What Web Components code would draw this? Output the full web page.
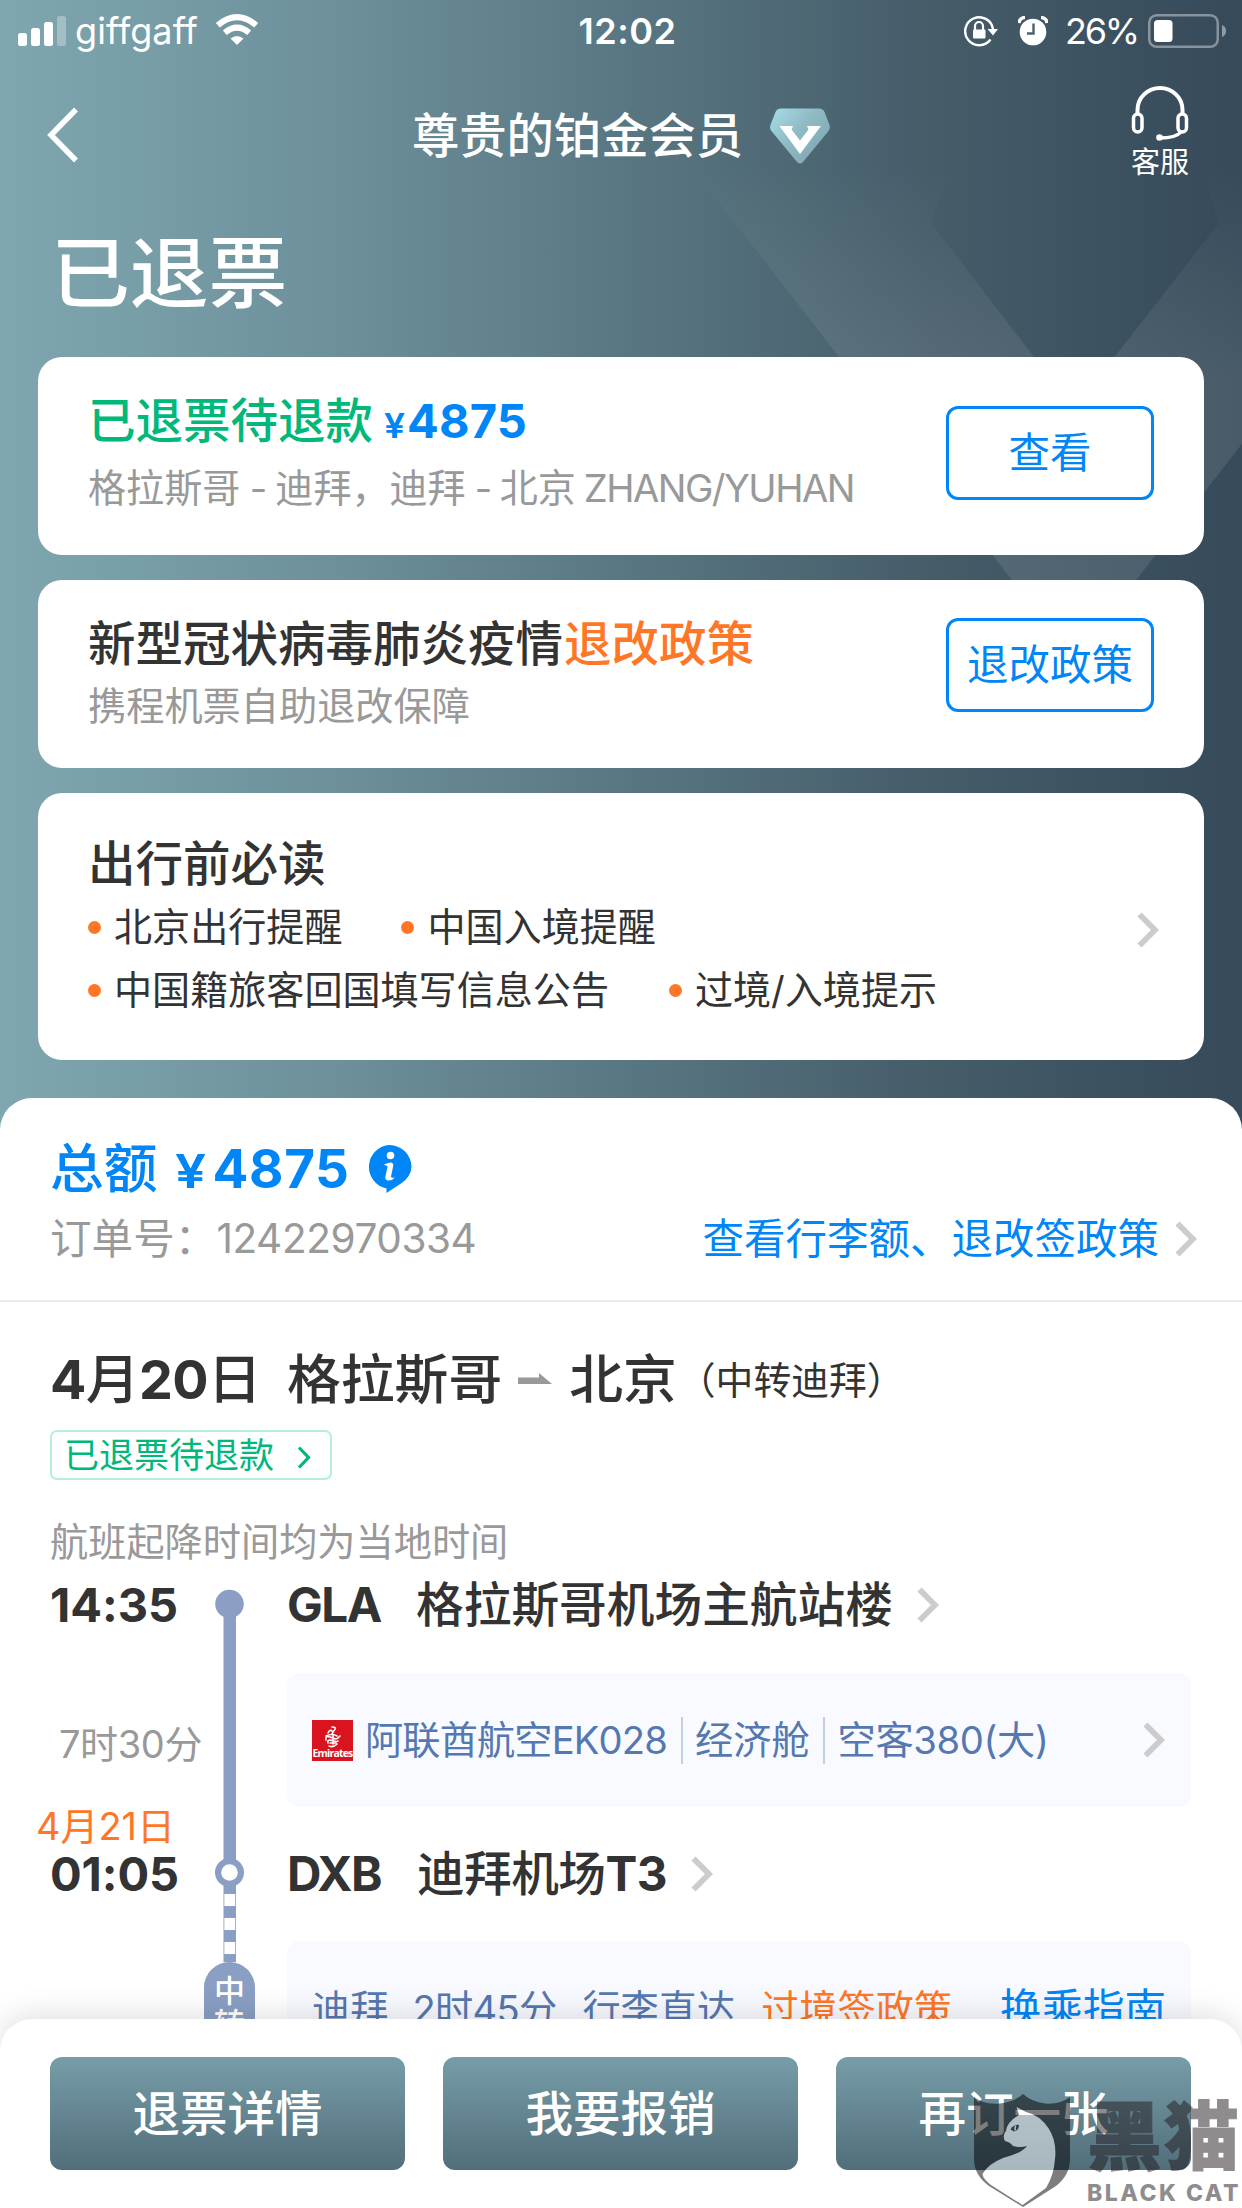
<!DOCTYPE html>
<html lang="zh-CN">
<head>
<meta charset="utf-8">
<title>订单详情</title>
<style>
html,body{margin:0;padding:0}
body{width:1242px;height:2208px;overflow:hidden;background:#fff;font-family:Inter,"Noto Sans CJK SC",sans-serif;color:#333;font-feature-settings:"calt" 0}
</style>
</head>
<body>
<order-screen></order-screen>
<script>
function define(name, html, setup) {
  customElements.define(name, class extends HTMLElement {
    connectedCallback() {
      if (this.shadowRoot) return;
      const root = this.attachShadow({ mode: 'open' });
      root.innerHTML = html;
      if (setup) setup.call(this, root);
    }
  });
}

define('status-bar', `
<style>
:host{display:flex;height:62px;align-items:center;color:#fff;font-size:36px;line-height:62px}
.l,.r{flex:1 1 0;min-width:0;display:flex;align-items:center}
.l{padding-left:18px}.r{justify-content:flex-end;padding-right:15px}
.time{font-weight:600;display:flex;margin-left:10px}
svg{display:block;flex:none}
</style>
<div class="l">
<svg width="48" height="30" viewBox="0 0 48 30" fill="#fff"><rect y="17" width="9" height="13" rx="2.5"/><rect x="13" y="12" width="9" height="18" rx="2.5"/><rect x="26" y="6" width="9" height="24" rx="2.5"/><rect x="39" width="9" height="30" rx="2.5" opacity=".3"/></svg>
<fit-text w="123" style="margin-left:9px">giffgaff</fit-text>
<svg style="margin-left:17px;margin-top:-2px" width="44" height="32" viewBox="0 0 44 32"><path d="M22 31L15.5 24.5Q22 19.500 28.500 24.500Z" fill="#fff"/><path d="M9.800 18.700Q22 8.500 34.200 18.700" stroke="#fff" stroke-width="6" fill="none"/><path d="M2.800 11.200Q22 -4.800 41.200 11.200" stroke="#fff" stroke-width="6" fill="none"/></svg>
</div>
<div class="time"><fit-text w="98">12:02</fit-text></div>
<div class="r">
<svg width="34" height="32" viewBox="0 0 34 32" fill="none" stroke="#fff"><path d="M26.500 24.500A14 14 0 1 1 29 14" stroke-width="2.400"/><path d="M23.500 14h10.500l-5 6.500z" fill="#fff" stroke="none"/><path d="M11 15v-4a4 4 0 0 1 8 0v4" stroke-width="2.200"/><rect x="9" y="14.500" width="12.500" height="9" rx="1" fill="#fff" stroke="none"/></svg>
<svg style="margin-left:20px" width="30" height="30" viewBox="0 0 30 30"><circle cx="15" cy="16" r="13.300" fill="#fff"/><path d="M1 7A6 6 0 0 1 7 1.500M29 7A6 6 0 0 0 23 1.500" stroke="#fff" stroke-width="3.500" fill="none"/><path d="M15.500 7.500V17.500H9" fill="none" stroke="#4a6270" stroke-width="2.400"/></svg>
<fit-text w="73" style="margin-left:17px">26%</fit-text>
<svg style="margin-left:10px" width="79" height="34" viewBox="0 0 79 34"><rect x="1.250" y="1.250" width="68.500" height="31.500" rx="7.500" fill="none" stroke="#fff" stroke-opacity=".4" stroke-width="2.500"/><rect x="6" y="6" width="18.500" height="22" rx="3.500" fill="#fff"/><path d="M74 11a6.500 6.500 0 0 1 0 12z" fill="#fff" opacity=".45"/></svg>
</div>`);

define('nav-bar', `
<style>
:host{display:grid;grid-template-columns:1fr auto 1fr;height:146px;align-items:center;color:#fff}
svg{display:block}
.back{padding-left:46px}
.title{display:flex;align-items:center;font-size:47.3px;font-weight:500;line-height:60px;padding-top:2px}
.help{justify-self:end;margin-right:53px;display:flex;flex-direction:column;align-items:center;font-size:29px;line-height:34px;margin-top:-4px}
</style>
<div class="back"><svg width="34" height="56" viewBox="0 0 34 56"><path d="M30 2.500L5 28l25 25.500" fill="none" stroke="#fff" stroke-width="5.500"/></svg></div>
<div class="title"><span><slot></slot></span>
<svg style="margin-left:27px" width="60" height="56" viewBox="0 0 60 56"><defs><linearGradient id="g" x2="1" y2=".8"><stop stop-color="#a6dde8"/><stop offset=".5" stop-color="#8fbac4"/><stop offset="1" stop-color="#7ca4ae"/></linearGradient></defs><path d="M11 .500H49Q53 .500 54.500 4L59.500 17Q60.500 20 59 22.500L33 54Q30 57 27 54L1 22.500Q-.500 20 .500 17L5.500 4Q7 .500 11 .500Z" fill="url(#g)"/><path d="M9.500 18H23L21.500 21.500L30 32.500L38.500 21.500L37 18H51L30 46Z" fill="#fff"/></svg></div>
<div class="help"><svg width="58" height="56" viewBox="0 0 58 56" fill="none" stroke="#fff" stroke-width="4"><path d="M6.500 28V24A22.500 22 0 0 1 51.500 24V28"/><rect x="2.500" y="28" width="8.500" height="18" rx="4.250" stroke-width="3.500"/><rect x="47" y="28" width="8.500" height="18" rx="4.250" stroke-width="3.500"/><path d="M50 46Q45 52 29 52" stroke-width="3.500"/><circle cx="28.500" cy="51.500" r="3.300" fill="#fff" stroke="none"/></svg><span style="margin-top:4px">客服</span></div>`);

define('chevron-icon', `
<style>:host{display:block;flex:none;width:22px;height:36px;color:#ccc}svg{display:block;width:100%;height:100%}</style>
<svg viewBox="0 0 22 36"><path d="M2.500 2.500L18 18L2.500 33.500" fill="none" stroke="currentColor" stroke-width="5.800"/></svg>`);

define('outline-button', `
<style>:host{display:flex;flex:none;box-sizing:border-box;width:208px;height:94px;border:3px solid #0086f6;border-radius:12px;align-items:center;justify-content:center;color:#0086f6;font-size:41.500px;line-height:60px;padding-bottom:1px}</style><slot></slot>`);

define('hero-card', `
<style>
:host{display:flex;box-sizing:border-box;margin:0 38px;background:#fff;border-radius:24px;padding:0 50px;justify-content:space-between;position:relative}
</style><div><slot></slot></div><slot name="action"></slot>`);

define('bullet-item', `
<style>:host{display:flex;align-items:center;font-size:38.100px;line-height:46px}i{width:13px;height:13px;border-radius:50%;background:#ff7726;margin-right:13px}</style><i></i><slot></slot>`);

define('member-hero', `
<style>
:host{display:block;height:1098px;color:#fff;position:relative}
.v{position:absolute;left:0;top:0}
h1{margin:0 0 18px;padding:1px 0 0 51px;height:130px;font-size:78.800px;line-height:130px;font-weight:500}
status-bar,nav-bar,h1{position:relative}
hero-card{color:#333}
.t{font-size:47.500px;font-weight:500;line-height:60px;display:flex;align-items:baseline;height:60px;white-space:nowrap}
.s{font-size:38.100px;line-height:46px;color:#999;display:flex;height:46px;white-space:nowrap}
.b{display:flex}
</style>
<svg class="v" width="1242" height="700" viewBox="0 0 1242 700"><defs><linearGradient id="f" gradientUnits="userSpaceOnUse" x1="0" y1="165" x2="0" y2="380"><stop stop-color="#fff" stop-opacity="0"/><stop offset="1" stop-color="#fff" stop-opacity=".095"/></linearGradient></defs><path d="M690 165H951L931 223L1074 409L1219 223L1200 165H1300V369L1074 660Z" fill="url(#f)"/></svg>
<status-bar></status-bar>
<nav-bar>尊贵的铂金会员</nav-bar>
<h1>已退票</h1>
<hero-card style="height:198px;margin-bottom:25px;padding-top:34px">
<div class="t" style="color:#00b87a">已退票待退款<fit-text w="22" style="font-size:34px;font-weight:600;margin-left:11px;color:#0086f6;transform:scaleX(1.1);transform-origin:0 0">¥</fit-text><fit-text w="120" style="font-weight:700;font-size:47px;margin-left:1px;color:#0086f6">4875</fit-text></div>
<div class="s" style="margin-top:14px">格拉斯哥<fit-text w="35" pre> - </fit-text>迪拜，迪拜<fit-text w="34" pre> - </fit-text>北京<fit-text w="270" style="margin-left:8px">ZHANG/YUHAN</fit-text></div>
<outline-button slot="action" style="margin-top:15px">查看</outline-button>
</hero-card>
<hero-card style="height:188px;margin-bottom:25px;padding-top:34px">
<div class="t">新型冠状病毒肺炎疫情<span style="color:#ff7726;padding-left:1px">退改政策</span></div>
<div class="s" style="margin-top:9px;font-size:38.200px">携程机票自助退改保障</div>
<outline-button slot="action" style="margin-top:4px">退改政策</outline-button>
</hero-card>
<hero-card style="height:267px;padding-top:41px;padding-right:45px">
<div class="t">出行前必读</div>
<div class="b" style="margin-top:10px"><bullet-item>北京出行提醒</bullet-item><bullet-item style="margin-left:59px">中国入境提醒</bullet-item></div>
<div class="b" style="margin-top:17px"><bullet-item>中国籍旅客回国填写信息公告</bullet-item><bullet-item style="margin-left:60px"><fit-text w="242">过境/入境提示</fit-text></bullet-item></div>
<chevron-icon slot="action" style="margin-top:78px"></chevron-icon>
</hero-card>`);

define('order-summary', `
<style>
:host{display:block;padding:36px 45px 37px 50px;border-bottom:2px solid #ebebeb}
.a{display:flex;align-items:baseline;height:70px;line-height:70px;color:#0086f6;font-size:53.800px;font-weight:500}
.a svg{align-self:center;margin:0 0 0 17px}
.b{display:flex;align-items:center;height:50px;line-height:50px;margin-top:9px;padding-top:1px;margin-bottom:-1px;font-size:41.600px;color:#999}
.link{margin-left:auto;color:#0086f6;font-size:41.500px}
.y{transform:scaleX(1.2);transform-origin:0 0}
</style>
<div class="a">总额<fit-text class="y" w="36" style="font-size:46px;font-weight:600;margin-left:17px">¥</fit-text><fit-text w="137" style="font-weight:700;margin-left:2px;font-size:53px">4875</fit-text>
<svg width="45" height="48" viewBox="0 0 45 48"><path d="M22.500 0A22 22 0 0 1 44.500 21.500Q44 32 34 38.500L19.500 48V43.500A22 22 0 0 1 22.500 0Z" fill="#0086f6"/><circle cx="23.500" cy="10.500" r="3.800" fill="#fff"/><path d="M16.500 20Q21 17 24.500 17.500Q27 18.500 26 22L24 31.500Q24 33.500 28 32.500Q25 36 20.500 35.500Q17.500 34.500 18.500 31L20.500 22Q20.500 20 16.500 20Z" fill="#fff"/></svg></div>
<div class="b">订单号：<fit-text w="260" style="font-size:40.500px">12422970334</fit-text><span class="link">查看行李额、退改签政策</span><chevron-icon style="margin-left:16px"></chevron-icon></div>`);

define('route-heading', `
<style>
:host{display:block;padding:43px 50px 0}
.r{display:flex;align-items:center;height:70px;line-height:70px;font-size:53.800px;font-weight:500;white-space:nowrap}
b{font-weight:700}
.via{font-size:37.800px;font-weight:400;margin-left:1px}
.tag{display:inline-flex;box-sizing:border-box;width:282px;height:50px;margin-top:15px;border:2px solid #b5eedb;border-radius:7px;padding:0 19px 0 12px;color:#00b87a;font-size:35px;line-height:44px;align-items:center;justify-content:space-between}
.note{margin-top:39px;height:46px;line-height:46px;font-size:38.200px;color:#999}
.wrap{display:flex}
</style>
<div class="r"><fit-text w="211"><b>4</b>月<b>20</b>日</fit-text><span style="margin-left:26px">格拉斯哥</span>
<svg style="margin-left:16px;margin-top:-4px" width="34" height="11" viewBox="0 0 34 11"><path d="M0 4.500H21V0L34 11H0Z" fill="#999"/></svg>
<span style="margin-left:17px">北京</span><span class="via">（中转迪拜）</span></div>
<div class="wrap"><div class="tag"><span>已退票待退款</span><svg style="margin-top:4px" width="14" height="23" viewBox="0 0 14 23"><path d="M2 1.500L11.500 11.500L2 21.500" fill="none" stroke="#00b87a" stroke-width="3.200"/></svg></div></div>
<div class="note">航班起降时间均为当地时间</div>`);

define('airport-row', `
<style>:host{display:flex;align-items:center;height:60px;line-height:60px;font-size:47.700px;font-weight:500;white-space:nowrap}.c{width:129px;font-weight:700}</style>
<div class="c"><slot name="code"></slot></div><slot></slot><chevron-icon style="margin-left:24px"></chevron-icon>`);

define('detail-box', `
<style>:host{display:flex;box-sizing:border-box;height:134px;border-radius:12px;background:#f8faff;align-items:center;padding:0 25px;color:#5578b0;font-size:38.200px;line-height:46px;white-space:nowrap}</style><slot></slot>`);

define('airline-logo', `
<style>:host{display:block;width:41px;height:41px;background:#d9141e;color:#fff;overflow:hidden}svg{display:block;margin:6px auto 0}div{font:700 10.500px/12px "Open Sans",sans-serif;text-align:center;margin-top:-1px}</style>
<svg width="18" height="22" viewBox="0 0 18 22" fill="none" stroke="#fff" stroke-width="1.600" stroke-linecap="round"><path d="M8 1Q13 1 10.500 4T8 8M4 7Q6 3 8 5M2 10Q8 7 13 10M2 14Q1 9 6 11T12 13T16 10M4 17Q3 13 8 14.500T14 15M5 20Q9 22 13 18M9 8V18M6 17H12"/></svg>
<div><fit-text w="40">Emirates</fit-text></div>`);

define('time-rail', `
<style>
:host{display:flex;flex-direction:column;align-items:center;width:51px}
svg{display:block;flex:none}
.p{width:51px;height:140px;border-radius:25.500px;background:#8a9fc3;color:#fff;font-size:31px;line-height:33px;box-sizing:border-box;padding:12px 10px 0;text-align:center;font-weight:500}
</style>
<svg width="51" height="397" viewBox="0 0 51 397"><g fill="#8a9fc3"><circle cx="25.500" cy="39" r="14.300"/><rect x="19.500" y="39" width="12.500" height="358"/><circle cx="25.500" cy="307.500" r="14.500"/></g><circle cx="25.500" cy="307.500" r="8.300" fill="#fff"/><g fill="#fff"><rect x="20.300" y="329" width="10.900" height="12"/><rect x="20.300" y="353" width="10.900" height="12"/><rect x="20.300" y="377" width="10.900" height="12"/></g></svg>
<div class="p">中转</div>`);

define('flight-timeline', `
<style>
:host{display:grid;grid-template-columns:166px 51px 904px;column-gap:0;padding-left:38px}
.t,.d{display:flex;flex-direction:column}
.t b{font-weight:700;font-size:47px;line-height:60px;margin:10px 0 0 12px;height:60px}
.t .e{line-height:46px;height:46px;margin-top:1px}
.d{padding:10px 0 0;margin-left:32px;width:904px}
.g{color:#999;font-size:38px;line-height:46px;margin:86px 0 0 21px}
.o{color:#ff7726;font-size:38px;line-height:46px;margin:36px 0 1px -2px}
i{width:2px;height:47px;background:#c0d0e6;flex:none}
</style>
<div class="t"><b><fit-text w="128">14:35</fit-text></b><div class="g"><fit-text w="143">7时30分</fit-text></div><div class="o"><fit-text w="139">4月21日</fit-text></div><b class="e"><fit-text w="129">01:05</fit-text></b></div>
<time-rail></time-rail>
<div class="d">
<airport-row><fit-text slot="code" w="94">GLA</fit-text>格拉斯哥机场主航站楼</airport-row>
<detail-box style="margin-top:38px"><airline-logo></airline-logo><fit-text w="302" style="margin-left:12px">阿联酋航空EK028</fit-text><i style="margin-left:14px"></i><span style="margin-left:12px">经济舱</span><i style="margin-left:13px"></i><fit-text w="211" style="margin-left:13px">空客380(大)</fit-text><chevron-icon style="margin-left:auto;margin-right:1px"></chevron-icon></detail-box>
<airport-row style="margin-top:37px"><fit-text slot="code" w="94">DXB</fit-text><fit-text w="250" style="margin-left:1px">迪拜机场<b>T3</b></fit-text></airport-row>
<detail-box style="margin-top:37px;padding-top:1px"><span>迪拜</span><fit-text w="144" style="margin-left:24px">2时45分</fit-text><span style="margin-left:26px">行李直达</span><span style="margin-left:26px;color:#ff7726">过境签政策</span><span style="margin-left:auto;color:#0086f6;font-size:41.500px">换乘指南</span></detail-box>
</div>`);

define('action-bar', `
<style>:host{display:flex;box-sizing:border-box;position:relative;height:189px;background:#fff;border-radius:32px 32px 0 0;box-shadow:0 -4px 30px rgba(0,0,0,.13);padding:38px 51px 0 50px;gap:38px}
::slotted(button){all:unset;flex:1;height:113px;border-radius:12px;background:linear-gradient(#769da8,#526e7b);color:#fff;font-size:47.500px;font-weight:500;text-align:center;line-height:110px}</style><slot></slot>`);

define('black-cat-mark', `
<style>
:host{position:absolute;left:973px;top:2093px;width:269px;height:115px;color:#231a1e;opacity:.5;display:flex;gap:15px}
svg{display:block;flex:none}
.w{display:flex;flex-direction:column}
.c{font-size:75px;font-weight:900;line-height:88px;height:88px;-webkit-text-stroke:1px #231a1e}
.e{font-size:23px;font-weight:800;line-height:24px;height:24px}
</style>
<svg width="99" height="115" viewBox="0 0 99 115"><path d="M1 4Q11 12 27 10.500Q41 9 50 1Q59 9 72 10.500Q86 12 97 4V66Q97 82 83 93L50 114L16 93Q1 82 1 66Z"/><path d="M49.500 112L18 92Q10 86 9.500 81Q15 71 30 65Q49 60 54 53Q47 55 40 53Q37 49 32 48Q29 42 33 38Q34 29 46 22L43.500 14L53 19Q67 22 76 36Q84 49 82 66Q81 82 73 95Z" fill="#fff"/><path d="M37.500 36.500Q41 31 46 32Q46 37 41 38.500Z"/><path d="M42.500 32.500L42 37.500" stroke="#fff" stroke-width="1.500"/></svg>
<div class="w"><div class="c"><fit-text w="154">黑猫</fit-text></div><div class="e"><fit-text w="154">BLACK CAT</fit-text></div></div>`);

define('order-screen', `
<style>
:host{display:flex;flex-direction:column;width:1242px;height:2208px;overflow:hidden;position:relative;background:linear-gradient(90deg,#7fa7b0 0%,#6d909b 27%,#587681 51%,#455c69 75%,#364a59 100%)}
main{height:2060px;overflow:hidden;flex:none}
.sheet{background:#fff;border-radius:32px 32px 0 0;min-height:1000px}
action-bar{margin-top:-41px;flex:none}
</style>
<main><member-hero></member-hero><div class="sheet"><order-summary></order-summary><route-heading></route-heading><flight-timeline></flight-timeline></div></main>
<action-bar><button>退票详情</button><button>我要报销</button><button>再订一张</button></action-bar>
<black-cat-mark></black-cat-mark>`);

/* Spreads its text over the width given in the "w" attribute. */
define('fit-text', `<style>:host{display:inline-block;flex:none;white-space:pre}span{display:inline-block}</style><span><slot></slot></span>`, function (root) {
  const w = +this.getAttribute('w'), span = root.firstElementChild.nextElementSibling;
  const n = this.textContent.length;
  const natural = span.getBoundingClientRect().width;
  this.style.width = w + 'px';
  if (n > 1) span.style.letterSpacing = ((w - natural) / n).toFixed(3) + 'px';
});
</script>
</body>
</html>
